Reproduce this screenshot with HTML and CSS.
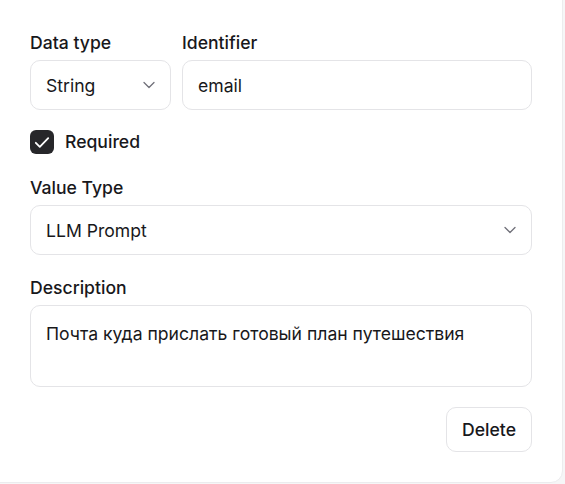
FILE: index.html
```html
<!DOCTYPE html>
<html lang="en">
<head>
<meta charset="utf-8">
<link rel="stylesheet" href="styles.css">
</head>
<body>
<div class="page">
  <div class="card">
    <div class="row">
      <div class="field field-type">
        <label class="label">Data type</label>
        <div class="control select">
          <span>String</span>
          <svg class="chev" width="12" height="8" viewBox="0 0 12 8"><path d="M1 1.5l5 5 5-5" fill="none" stroke="#71717a" stroke-width="1.3" stroke-linecap="round" stroke-linejoin="round"/></svg>
        </div>
      </div>
      <div class="field field-grow">
        <label class="label">Identifier</label>
        <div class="control"><span>email</span></div>
      </div>
    </div>
    <div class="check-row">
      <span class="checkbox">
        <svg width="16" height="13" viewBox="0 0 16 13"><path d="M1.8 6.8l4 4L14.2 2.2" fill="none" stroke="#fff" stroke-width="1.8" stroke-linecap="round" stroke-linejoin="round"/></svg>
      </span>
      <span class="check-label">Required</span>
    </div>
    <div class="field block">
      <label class="label">Value Type</label>
      <div class="control select">
        <span>LLM Prompt</span>
        <svg class="chev" width="12" height="8" viewBox="0 0 12 8"><path d="M1 1.5l5 5 5-5" fill="none" stroke="#71717a" stroke-width="1.3" stroke-linecap="round" stroke-linejoin="round"/></svg>
      </div>
    </div>
    <div class="field block block-gap">
      <label class="label">Description</label>
      <div class="textarea">Почта куда прислать готовый план путешествия</div>
    </div>
    <div class="actions">
      <button class="btn">Delete</button>
    </div>
  </div>
</div>
</body>
</html>
```

FILE: styles.css
```css
* { box-sizing: border-box; }
html, body {
  margin: 0;
  padding: 0;
  background: #f6f6f7;
  font-family: Inter, "Noto Sans", sans-serif;
  color: #18181b;
}
.page {
  width: 565px;
  height: 484px;
  overflow: hidden;
}
.card {
  margin: -12px 0 0 -12px;
  width: 575px;
  height: 495px;
  background: #fff;
  border: 1px solid #ececee;
  border-radius: 12px;
  padding: 43px 30px 0 41px;
  display: flex;
  flex-direction: column;
}
.row {
  display: flex;
  gap: 11px;
}
.field {
  display: flex;
  flex-direction: column;
  gap: 6px;
}
.field-type { width: 141px; flex: none; }
.field-grow { flex: 1; }
.label {
  font-size: 17.6px;
  font-weight: 500;
  line-height: 22px;
}
.control {
  height: 50px;
  border: 1px solid #e4e4e7;
  border-radius: 10px;
  padding: 2px 15px 0;
  display: flex;
  align-items: center;
  justify-content: space-between;
  font-size: 17.6px;
  line-height: 24px;
}
.chev { flex: none; margin-top: -2px; }
.check-row {
  display: flex;
  align-items: center;
  gap: 11px;
  margin: 20px 0 23px;
}
.checkbox {
  width: 24px;
  height: 24px;
  border-radius: 6px;
  background: #27272a;
  display: flex;
  align-items: center;
  justify-content: center;
}
.check-label {
  font-size: 17.6px;
  font-weight: 500;
  line-height: 24px;
}
.block-gap { margin-top: 22px; }
.textarea {
  height: 82px;
  border: 1px solid #e4e4e7;
  border-radius: 10px;
  padding: 15px 15px;
  font-size: 17.6px;
  line-height: 26px;
}
.actions {
  display: flex;
  justify-content: flex-end;
  margin-top: 20px;
}
.btn {
  width: 86px;
  height: 45px;
  border: 1px solid #e4e4e7;
  border-radius: 10px;
  background: #fff;
  font-family: inherit;
  font-size: 17.6px;
  font-weight: 500;
  color: #18181b;
  padding: 0;
}
```
